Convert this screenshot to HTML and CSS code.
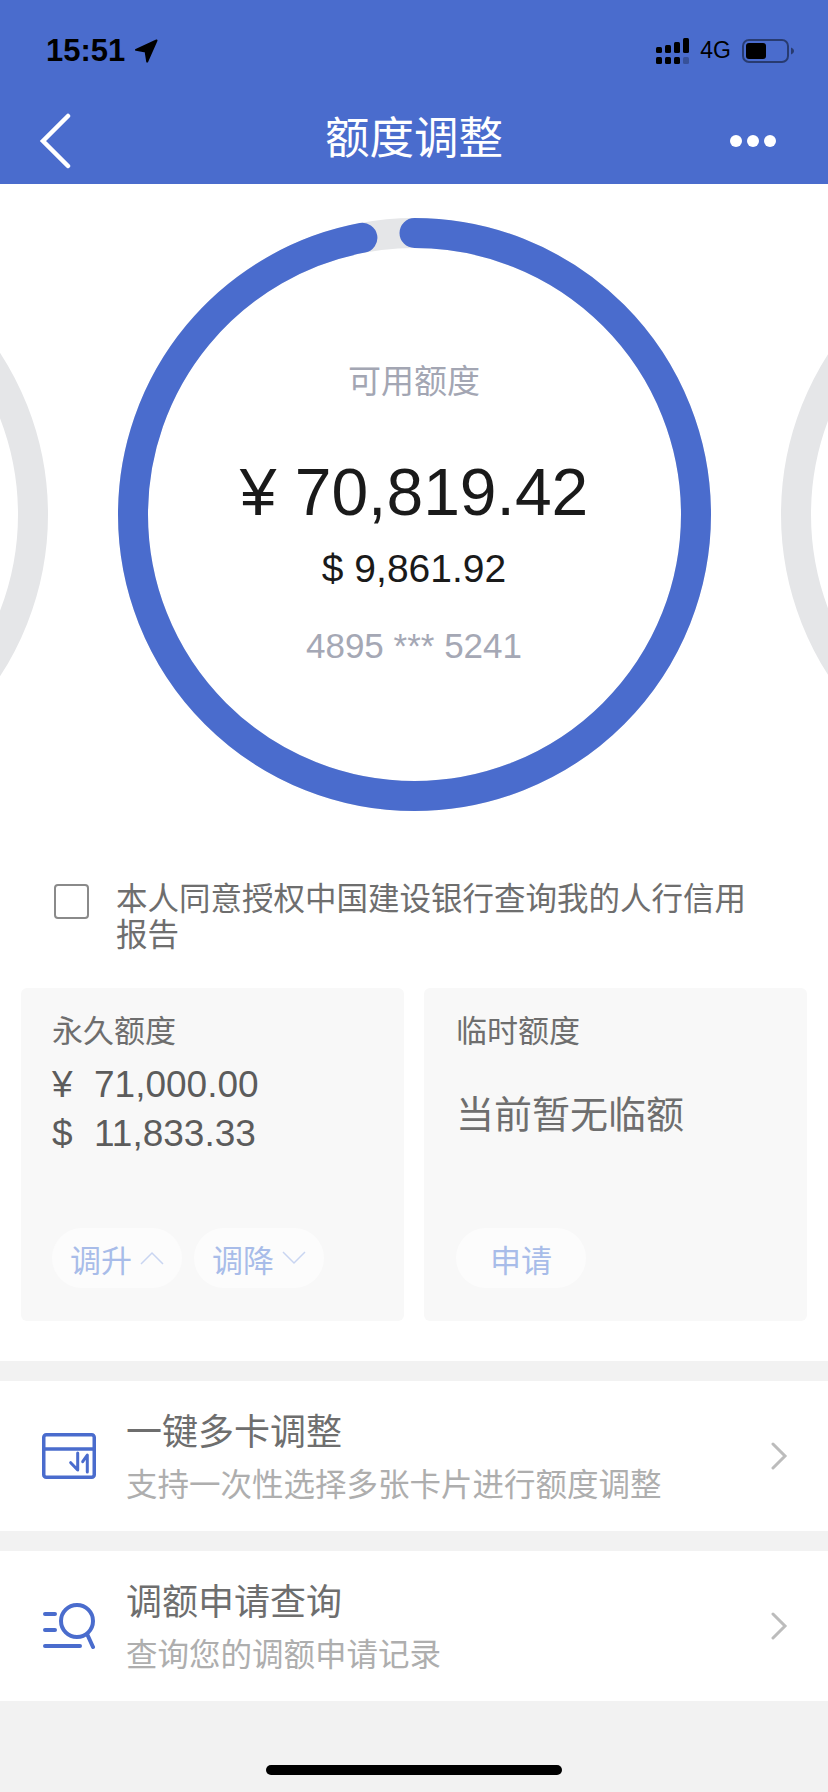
FILE: index.html
```html
<!DOCTYPE html>
<html lang="zh-CN">
<head>
    <meta charset="UTF-8">
    <meta name="viewport" content="width=device-width, initial-scale=1.0">
    <title>额度调整</title>
    <link rel="stylesheet" href="styles.css">
</head>
<body>
    <div class="page">
        <header class="top">
            <div class="status">
                <div class="status-left">
                    <span class="time">15:51</span>
                    <svg class="locate" width="24" height="24" viewBox="0 0 24 24"><path d="M22.5 1.5 L2 10.8 L11.6 12.4 L13.2 22.5 Z" fill="#000" stroke="#000" stroke-width="2" stroke-linejoin="round"/></svg>
                </div>
                <div class="status-right">
                    <svg width="33" height="26" viewBox="0 0 33 26">
                        <rect x="0" y="9" width="6" height="6" rx="1.5"/>
                        <rect x="9" y="7" width="6" height="8" rx="1.5"/>
                        <rect x="18" y="4" width="6" height="11" rx="1.5"/>
                        <rect x="27" y="0" width="6" height="15" rx="1.5"/>
                        <rect x="0" y="19" width="6" height="7" rx="1.5"/>
                        <rect x="9" y="19" width="6" height="7" rx="1.5"/>
                        <rect x="18" y="19" width="6" height="7" rx="1.5"/>
                        <rect x="27" y="19" width="6" height="7" rx="1.5" opacity="0.25"/>
                    </svg>
                    <span class="net">4G</span>
                    <svg width="52" height="24" viewBox="0 0 52 24">
                        <rect x="1" y="1" width="45" height="22" rx="6" fill="none" stroke="#000" stroke-opacity="0.45" stroke-width="2"/>
                        <rect x="4" y="4" width="20" height="16" rx="3"/>
                        <path d="M49 8.5 C51 9.5 52 10.5 52 12 C52 13.5 51 14.5 49 15.5 Z" fill="#000" fill-opacity="0.45"/>
                    </svg>
                </div>
            </div>
            <nav class="nav">
                <svg class="back" width="32" height="56" viewBox="0 0 32 56"><path d="M29 3 L4 28 L29 53" fill="none" stroke="#fff" stroke-width="4.5" stroke-linecap="round" stroke-linejoin="miter"/></svg>
                <h1>额度调整</h1>
                <div class="more"><i></i><i></i><i></i></div>
            </nav>
        </header>

        <section class="carousel">
            <div class="slide">
                <svg class="ring" viewBox="0 0 593 593"><circle cx="296.5" cy="296.5" r="281.5" class="track"/></svg>
            </div>
            <div class="slide">
                <svg class="ring" viewBox="0 0 593 593">
                    <circle cx="296.5" cy="296.5" r="281.5" class="track"/>
                    <!-- 97% of the circumference (2pi * 281.5 = 1768.7) -->
                    <circle cx="296.5" cy="296.5" r="281.5" class="bar" stroke-dasharray="1715.6 1768.7" transform="rotate(-90 296.5 296.5)"/>
                </svg>
                <div class="ring-text">
                    <div class="ring-label">可用额度</div>
                    <div class="ring-cny">¥ 70,819.42</div>
                    <div class="ring-usd">$ 9,861.92</div>
                    <div class="ring-card">4895 *** 5241</div>
                </div>
            </div>
            <div class="slide">
                <svg class="ring" viewBox="0 0 593 593"><circle cx="296.5" cy="296.5" r="281.5" class="track"/></svg>
            </div>
        </section>

        <div class="agree">
            <span class="check"></span>
            <p>本人同意授权中国建设银行查询我的人行信用报告</p>
        </div>

        <section class="cards">
            <div class="card">
                <div class="card-title">永久额度</div>
                <div class="amount"><span>¥</span>71,000.00</div>
                <div class="amount"><span>$</span>11,833.33</div>
                <div class="actions">
                    <a class="pill">调升<svg width="24" height="14" viewBox="0 0 24 14"><path d="M1 13 L12 2 L23 13" class="caret"/></svg></a>
                    <a class="pill">调降<svg width="24" height="14" viewBox="0 0 24 14"><path d="M1 1 L12 12 L23 1" class="caret"/></svg></a>
                </div>
            </div>
            <div class="card">
                <div class="card-title">临时额度</div>
                <div class="none">当前暂无临额</div>
                <div class="actions">
                    <a class="pill">申请</a>
                </div>
            </div>
        </section>

        <section class="rows">
            <div class="row">
                <svg class="row-icon" width="54" height="46" viewBox="0 0 54 46" fill="none" stroke="#4a6ccd" stroke-width="3.5">
                    <rect x="1.75" y="1.75" width="50.5" height="42.5" rx="2.5"/>
                    <path d="M2 16 H52"/>
                    <path d="M35.7 20 V37 L28.7 29.7 M45.3 39 V22 L40.7 28.7" stroke-width="3" stroke-linejoin="round" stroke-linecap="round"/>
                </svg>
                <div class="row-text">
                    <div class="row-title">一键多卡调整</div>
                    <div class="row-sub">支持一次性选择多张卡片进行额度调整</div>
                </div>
                <svg class="arrow" width="17" height="28" viewBox="0 0 17 28"><path d="M2 2 L14 14 L2 26" fill="none" stroke="#bcbcbc" stroke-width="3" stroke-linecap="round"/></svg>
            </div>
            <div class="row">
                <svg class="row-icon" width="54" height="46" viewBox="0 0 54 46" fill="none" stroke="#4a6ccd" stroke-width="4" stroke-linecap="round">
                    <circle cx="35" cy="18" r="16"/>
                    <path d="M45.5 32 L51 44"/>
                    <path d="M3 11 H13 M3 27 H13 M3 43 H38"/>
                </svg>
                <div class="row-text">
                    <div class="row-title">调额申请查询</div>
                    <div class="row-sub">查询您的调额申请记录</div>
                </div>
                <svg class="arrow" width="17" height="28" viewBox="0 0 17 28"><path d="M2 2 L14 14 L2 26" fill="none" stroke="#bcbcbc" stroke-width="3" stroke-linecap="round"/></svg>
            </div>
        </section>

        <div class="home-bar"></div>
    </div>
</body>
</html>
```

FILE: styles.css
```css
body {
    margin: 0;
    padding: 0;
    font-family: "Liberation Sans", "Noto Sans CJK SC", sans-serif;
    background-color: #fff;
}

.page {
    position: relative;
    width: 828px;
    height: 1792px;
    overflow: hidden;
    background-color: #f2f2f2;
}

/* header */
.top {
    height: 184px;
    background-color: #4a6ccd;
}

.status {
    height: 88px;
    padding: 13px 34px 0 46px;
    box-sizing: border-box;
    display: flex;
    justify-content: space-between;
    align-items: center;
}

.status-left {
    display: flex;
    align-items: center;
    gap: 9px;
}

.time {
    font-size: 31px;
    font-weight: 700;
    color: #000;
}

.status-right {
    display: flex;
    align-items: center;
    gap: 11px;
}

.net {
    font-size: 23px;
    color: #000;
}

.nav {
    height: 96px;
    padding: 0 52px 0 52px;
    display: grid;
    grid-template-columns: 1fr auto 1fr;
    align-items: center;
}

.nav h1 {
    margin: -3px 0 0;
    font-size: 44.5px;
    font-weight: 400;
    color: #fff;
}

.back {
    margin: 9px 0 0 -13px;
}

.more {
    margin-top: 9px;
    display: flex;
    justify-content: flex-end;
    gap: 5px;
}

.more i {
    width: 12px;
    height: 12px;
    border-radius: 50%;
    background-color: #fff;
}

/* ring carousel */
.carousel {
    padding: 34px 0 73px;
    background-color: #fff;
    display: flex;
    justify-content: center;
    gap: 70px;
    overflow: hidden;
}

.slide {
    flex: 0 0 593px;
    height: 593px;
    display: grid;
}

.ring {
    grid-area: 1 / 1;
    width: 593px;
    height: 593px;
}

.track, .bar {
    fill: none;
    stroke-width: 30;
}

.track {
    stroke: #e5e6e8;
}

.bar {
    stroke: #4a6ccd;
    stroke-linecap: round;
}

.ring-text {
    grid-area: 1 / 1;
    padding-top: 144px;
    text-align: center;
}

.ring-label {
    font-size: 33px;
    line-height: 40px;
    color: #a3a6b3;
}

.ring-cny {
    margin-top: 50px;
    font-size: 66px;
    line-height: 80px;
    color: #1a1a1a;
}

.ring-usd {
    margin-top: 14px;
    font-size: 39px;
    line-height: 46px;
    color: #1a1a1a;
}

.ring-card {
    margin-top: 34px;
    font-size: 35px;
    line-height: 40px;
    color: #a5a8b5;
}

/* consent line */
.agree {
    padding: 0 60px 35px 54px;
    background-color: #fff;
    display: flex;
    align-items: flex-start;
    gap: 27px;
}

.check {
    flex: none;
    width: 35px;
    height: 35px;
    box-sizing: border-box;
    border: 2px solid #8a8a8a;
    border-radius: 4px;
}

.agree p {
    margin: -2px 0 0;
    font-size: 31.5px;
    line-height: 35.5px;
    color: #6e6e6e;
}

/* limit cards */
.cards {
    padding: 0 21px 40px;
    background-color: #fff;
    display: grid;
    grid-template-columns: 383px 383px;
    gap: 20px;
}

.card {
    height: 333px;
    padding: 25px 31px 33px;
    box-sizing: border-box;
    border-radius: 6px;
    background-color: #f8f8f8;
    display: flex;
    flex-direction: column;
}

.card + .card {
    padding-left: 32px;
}

.card-title {
    font-size: 31px;
    line-height: 38px;
    color: #6e6e6e;
}

.amount {
    font-size: 37px;
    line-height: 49px;
    color: #5c5c5c;
    display: flex;
}

.amount:nth-child(2) {
    margin-top: 9px;
}

.amount span {
    width: 42px;
}

.none {
    margin-top: 41px;
    font-size: 38px;
    line-height: 46px;
    color: #6e6e6e;
}

.actions {
    margin-top: auto;
    display: flex;
    gap: 12px;
}

.pill {
    width: 130px;
    height: 60px;
    border-radius: 30px;
    background-color: #fcfcfc;
    font-size: 31px;
    color: #a8bce9;
    display: flex;
    justify-content: center;
    align-items: center;
    gap: 8px;
}

.caret {
    fill: none;
    stroke: #c9d5f1;
    stroke-width: 1.5;
}

/* link rows */
.rows {
    padding-top: 20px;
    display: flex;
    flex-direction: column;
    gap: 20px;
}

.row {
    height: 150px;
    padding: 0 40px 0 42px;
    background-color: #fff;
    display: flex;
    align-items: center;
}

.row-icon {
    flex: none;
}

.row-text {
    flex: 1;
    margin-left: 30px;
    padding-top: 2px;
}

.row-title {
    font-size: 36px;
    line-height: 44px;
    color: #6e6e6e;
}

.row-sub {
    margin-top: 11px;
    font-size: 31.5px;
    line-height: 38px;
    color: #aeaeae;
}

.home-bar {
    position: absolute;
    left: 266px;
    bottom: 17px;
    width: 296px;
    height: 10px;
    border-radius: 5px;
    background-color: #000;
}
```
